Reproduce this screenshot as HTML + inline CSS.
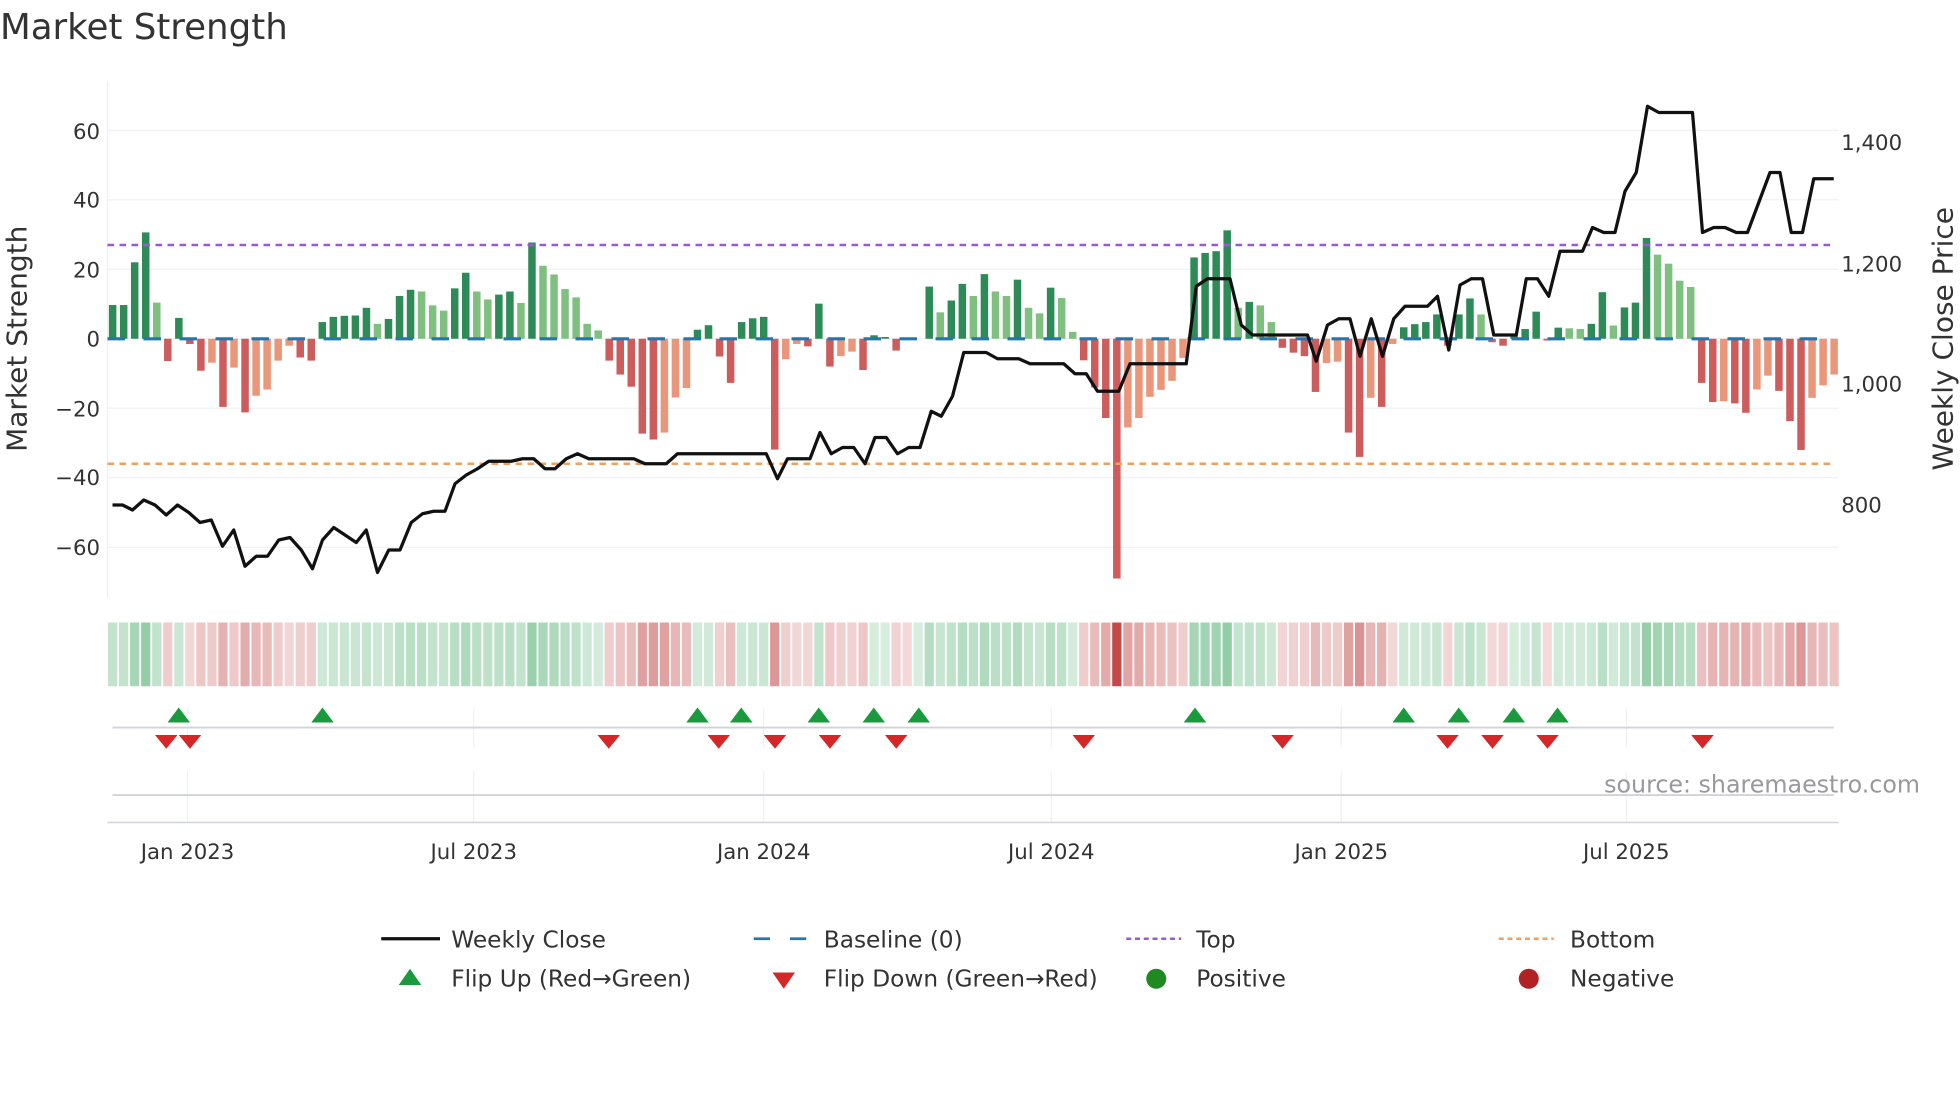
<!DOCTYPE html>
<html><head><meta charset="utf-8">
<style>
html,body{margin:0;padding:0;background:#fff;}
svg{display:block;font-family:"DejaVu Sans","Liberation Sans",sans-serif;}
</style></head>
<body>
<svg id="c" width="1960" height="1102" viewBox="0 0 1568 881.6" xmlns="http://www.w3.org/2000/svg">
<rect width="1568" height="882" fill="#fff"/>
<text x="0" y="31" font-size="28.5" fill="#333">Market Strength</text>
<g id="grid"></g>
<line x1="86" y1="65" x2="86" y2="478" stroke="#eceff3" stroke-width="1"/>
<g font-size="17" fill="#333" text-anchor="end">
<text x="80" y="111">60</text><text x="80" y="166">40</text><text x="80" y="222">20</text><text x="80" y="277">0</text>
<text x="80" y="333">−20</text><text x="80" y="388">−40</text><text x="80" y="444">−60</text>
</g>
<g font-size="17" fill="#333">
<text x="1473" y="120">1,400</text><text x="1473" y="217">1,200</text><text x="1473" y="313">1,000</text><text x="1473" y="410">800</text>
</g>
<text transform="translate(21,271) rotate(-90)" font-size="22.4" fill="#333" text-anchor="middle">Market Strength</text>
<text transform="translate(1562,271) rotate(-90)" font-size="22.4" fill="#333" text-anchor="middle">Weekly Close Price</text>
<g id="bars"></g>
<line x1="86" y1="271" x2="1467" y2="271" stroke="#1f77b4" stroke-width="2.5" stroke-dasharray="14,14.8"/>
<line x1="86" y1="196" x2="1467" y2="196" stroke="#9b59d6" stroke-width="2" stroke-dasharray="5.3,4.3"/>
<line x1="86" y1="371" x2="1467" y2="371" stroke="#f0a060" stroke-width="2" stroke-dasharray="5.3,4.3"/>
<polyline id="price" fill="none" stroke="#111" stroke-width="2.6" stroke-linejoin="round" points="90,404 98,404 106,408 115,400 124,404 133,412 142,404 151,410 160,418 169,416 178,437 187,424 196,453 205,445 214,445 223,432 232,430 241,440 250,455 258,432 267,422 276,428 285,434 293,424 302,458 311,440 320,440 329,418 338,411 347,409 356,409 364,387 373,380 382,375 391,369 400,369 409,369 418,367 427,367 436,375 444,375 453,367 462,363 471,367 480,367 489,367 498,367 507,367 516,371 524,371 533,371 542,363 551,363 560,363 569,363 578,363 587,363 596,363 605,363 613,363 622,383 630,367 639,367 648,367 656,346 665,363 674,358 683,358 692,371 700,350 709,350 718,363 727,358 736,358 745,329 753,333 762,317 771,282 780,282 789,282 798,287 806,287 815,287 824,291 833,291 842,291 851,291 860,299 869,299 878,313 886,313 895,313 904,291 913,291 922,291 931,291 940,291 949,291 957,229 966,223 975,223 984,223 993,260 1002,268 1011,268 1020,268 1029,268 1038,268 1046,268 1053,289 1062,260 1071,255 1080,255 1088,285 1097,255 1106,285 1115,255 1124,245 1133,245 1142,245 1150,237 1159,280 1168,228 1177,223 1186,223 1195,268 1204,268 1213,268 1221,223 1230,223 1239,237 1248,201 1257,201 1266,201 1274,182 1283,186 1292,186 1300,153 1309,138 1318,85 1327,90 1336,90 1345,90 1354,90 1362,186 1371,182 1380,182 1389,186 1398,186 1407,162 1416,138 1424,138 1433,186 1442,186 1451,143 1460,143 1467,143"/>
<g id="heat"></g>
<g id="vgrid"></g>
<line x1="90" y1="582" x2="1467" y2="582" stroke="#d0d3d8" stroke-width="1.5"/>
<line x1="90" y1="636" x2="1467" y2="636" stroke="#d0d3d8" stroke-width="1.5"/>
<line x1="86" y1="658" x2="1471" y2="658" stroke="#d0d3d8" stroke-width="1.2"/>
<g id="marks"></g>
<g font-size="17" fill="#333" text-anchor="middle">
<text x="150" y="687">Jan 2023</text><text x="379" y="687">Jul 2023</text><text x="611" y="687">Jan 2024</text>
<text x="841" y="687">Jul 2024</text><text x="1073" y="687">Jan 2025</text><text x="1301" y="687">Jul 2025</text>
</g>
<text x="1536" y="634" font-size="19" fill="#999" text-anchor="end">source: sharemaestro.com</text>
<g font-size="18.6" fill="#333">
<line x1="305" y1="751" x2="352" y2="751" stroke="#111" stroke-width="2.6"/>
<text x="361" y="758">Weekly Close</text>
<line x1="603" y1="751" x2="646" y2="751" stroke="#1f77b4" stroke-width="2.2" stroke-dasharray="13,16"/>
<text x="659" y="758">Baseline (0)</text>
<line x1="901" y1="751" x2="945" y2="751" stroke="#9b59d6" stroke-width="2" stroke-dasharray="4,3"/>
<text x="957" y="758">Top</text>
<line x1="1199" y1="751" x2="1243" y2="751" stroke="#f0a060" stroke-width="2" stroke-dasharray="4,3"/>
<text x="1256" y="758">Bottom</text>
<polygon points="319,788 337,788 328,775" fill="#1a9a3c"/>
<text x="361" y="789">Flip Up (Red→Green)</text>
<polygon points="618,778 636,778 627,791" fill="#d62728"/>
<text x="659" y="789">Flip Down (Green→Red)</text>
<circle cx="925" cy="783" r="8" fill="#1f8a1f"/>
<text x="957" y="789">Positive</text>
<circle cx="1223" cy="783" r="8" fill="#b22222"/>
<text x="1256" y="789">Negative</text>
</g>
</svg>
<script>
var d="9.7d,9.7d,22d,30.6d,10.4l,-6.4d,6d,-1.5d,-9.2d,-6.9l,-19.6d,-8.3l,-21.2d,-16.4l,-14.6l,-6.3l,-2l,-5.4d,-6.3d,4.8d,6.3d,6.6d,6.7d,8.9d,4.3l,5.7d,12.3d,14.1d,13.6l,9.6l,8.1l,14.5d,19d,13.6l,11.3l,12.7d,13.6d,10.3l,27.7d,21l,18.5l,14.3l,11.9l,4.3l,2.4l,-6.3d,-10.3d,-13.8d,-27.3d,-29d,-27l,-16.9l,-14.2l,2.6d,3.9d,-5.1d,-12.7d,4.8d,5.9d,6.3d,-31.9d,-5.9l,-1.5l,-2.2d,10.1d,-8d,-5l,-3.7l,-9d,1d,0.5d,-3.4d,-0.3d,0d,15d,7.6l,11d,15.8d,12.3l,18.6d,13.6l,12.3l,17d,8.9l,7.3l,14.7d,11.7l,2l,-6.2d,-14d,-22.8d,-69d,-25.5l,-22.8l,-16.7l,-14.7l,-12.1l,-5.5l,23.4d,24.7d,25.2d,31.2d,8.9l,10.6d,9.6l,4.8l,-2.6d,-4d,-5d,-15.3d,-7l,-6.6l,-27d,-34d,-17l,-19.6d,-1.5l,3.3d,4.2d,4.8d,7d,-2d,7d,11.6d,7l,-1d,-2d,1d,2.8d,7.8d,-0.5d,3.2d,3l,2.8l,4.3d,13.4d,3.8l,9d,10.4d,29d,24.2l,21.6l,16.7l,14.9l,-12.7d,-18.2d,-18l,-18.6d,-21.3d,-14.6l,-10.6l,-15d,-23.7d,-32d,-17l,-13.4l,-10.3l".split(",");
var NS="http://www.w3.org/2000/svg";
function el(p,t,a){var e=document.createElementNS(NS,t);for(var k in a)e.setAttribute(k,a[k]);document.getElementById(p).appendChild(e);return e;}
[60,40,20,0,-20,-40,-60].forEach(function(v){var y=271-v*2.78;el("grid","line",{x1:86,x2:1471,y1:y,y2:y,stroke:"#eef0f4","stroke-width":1});});
var sp=(1467.3-90.1)/156;
d.forEach(function(s,i){
 var v=parseFloat(s),lt=s.slice(-1)=="l",x=90.1+i*sp;
 var h=Math.abs(v)*2.78,col;
 if(v>=0)col=lt?"#7fbf7f":"#2e8b57";else col=lt?"#e9967a":"#cd5c5c";
 if(h>0.3)el("bars","rect",{x:x-3,y:v>=0?271-h:271,width:6,height:h,fill:col});
 var a=Math.min(1,0.2+Math.abs(v)/70*0.8);
 var hc=v>=0?"rgba(60,165,95,"+Math.min(a,0.6)+")":"rgba(195,70,70,"+a+")";
 el("heat","rect",{x:x-3.7,y:498,width:7.4,height:51,fill:hc});
});
[150,379,611,841,1073,1301].forEach(function(x){
 el("vgrid","line",{x1:x,x2:x,y1:566,y2:598,stroke:"#eef0f4","stroke-width":1});
 el("vgrid","line",{x1:x,x2:x,y1:617,y2:658,stroke:"#eef0f4","stroke-width":1});
});
[143,258,558,593,655,699,735,956,1123,1167,1211,1246].forEach(function(x){
 el("marks","polygon",{points:(x-9)+",578 "+(x+9)+",578 "+x+",566",fill:"#1a9a3c"});});
[133,152,487,575,620,664,717,867,1026,1158,1194,1238,1362].forEach(function(x){
 el("marks","polygon",{points:(x-9)+",588 "+(x+9)+",588 "+x+",599",fill:"#d62728"});});
</script>
</body></html>
